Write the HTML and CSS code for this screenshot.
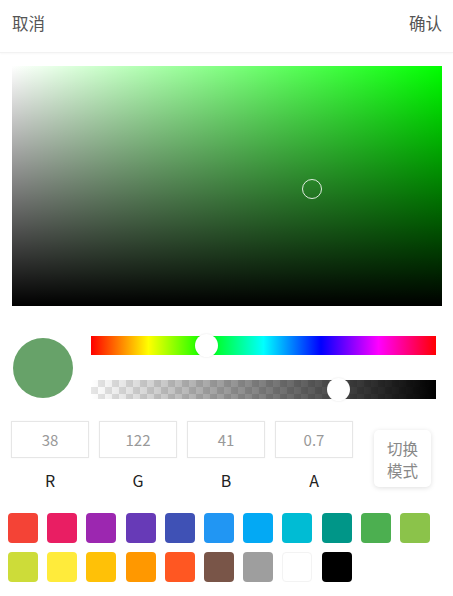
FILE: index.html
```html
<!DOCTYPE html>
<html lang="zh">
<head>
<meta charset="utf-8">
<link rel="stylesheet" href="styles.css">
</head>
<body>
<header class="bar">
  <span class="bar-btn">取消</span>
  <span class="bar-btn">确认</span>
</header>
<div class="sv">
  <div class="sv-white"></div>
  <div class="sv-black"></div>
  <div class="sv-cursor" style="left: 300px; top: 123px;"></div>
</div>
<div class="sliders">
  <div class="preview-wrap"><div class="preview"></div></div>
  <div class="tracks">
    <div class="track hue"><div class="thumb" style="left: 115px;"></div></div>
    <div class="track alpha"><div class="alpha-fill"></div><div class="thumb" style="left: 247px;"></div></div>
  </div>
</div>
<div class="inputs">
  <div class="field"><div class="box">38</div><div class="lbl">R</div></div>
  <div class="field"><div class="box">122</div><div class="lbl">G</div></div>
  <div class="field"><div class="box">41</div><div class="lbl">B</div></div>
  <div class="field"><div class="box">0.7</div><div class="lbl">A</div></div>
  <div class="mode">切换<br>模式</div>
</div>
<div class="swatches">
  <div class="sw" style="background:#f44336"></div>
  <div class="sw" style="background:#e91e63"></div>
  <div class="sw" style="background:#9c27b0"></div>
  <div class="sw" style="background:#673ab7"></div>
  <div class="sw" style="background:#3f51b5"></div>
  <div class="sw" style="background:#2196f3"></div>
  <div class="sw" style="background:#03a9f4"></div>
  <div class="sw" style="background:#00bcd4"></div>
  <div class="sw" style="background:#009688"></div>
  <div class="sw" style="background:#4caf50"></div>
  <div class="sw" style="background:#8bc34a"></div>
  <div class="sw" style="background:#cddc39"></div>
  <div class="sw" style="background:#ffeb3b"></div>
  <div class="sw" style="background:#ffc107"></div>
  <div class="sw" style="background:#ff9800"></div>
  <div class="sw" style="background:#ff5722"></div>
  <div class="sw" style="background:#795548"></div>
  <div class="sw" style="background:#9e9e9e"></div>
  <div class="sw sw-white" style="background:#ffffff"></div>
  <div class="sw" style="background:#000000"></div>
</div>
</body>
</html>
```
FILE: styles.css
```css
* { box-sizing: border-box; }
html, body { margin: 0; padding: 0; background: #fff; }
body {
  font-family: "Noto Sans CJK SC", "Noto Sans", sans-serif;
  width: 453px;
  height: 596px;
  overflow: hidden;
}
.bar {
  height: 53px;
  display: flex;
  justify-content: space-between;
  align-items: center;
  padding: 0 11px 5px 12px;
  border-bottom: 1px solid #f2f2f2;
  box-shadow: 0 1px 2px rgba(0,0,0,0.03);
}
.bar-btn {
  font-size: 16.5px;
  color: #555;
  line-height: 1;
}
.sv {
  position: relative;
  margin: 13px 11px 0 12px;
  height: 240px;
  background: #00ff00;
}
.sv-white {
  position: absolute; inset: 0;
  background: linear-gradient(to right, #fff, rgba(255,255,255,0));
}
.sv-black {
  position: absolute; inset: 0;
  background: linear-gradient(to bottom, rgba(0,0,0,0), #000);
}
.sv-cursor {
  position: absolute;
  width: 20px; height: 20px;
  margin: -10px 0 0 -10px;
  border: 1px solid rgba(255,255,255,0.85);
  border-radius: 50%;
}
.sliders {
  display: flex;
  margin-top: 30px;
  padding: 0 17px 0 13px;
  height: 64px;
}
.preview-wrap {
  width: 60px;
  padding-top: 2px;
}
.preview {
  width: 60px; height: 60px;
  border-radius: 50%;
  background: rgba(38,122,41,0.7);
}
.tracks {
  flex: 1;
  margin-left: 18px;
  display: flex;
  flex-direction: column;
  gap: 25px;
}
.track {
  position: relative;
  height: 19px;
}
.hue {
  background: linear-gradient(to right, #f00 0%, #ff0 16.66%, #0f0 33.33%, #0ff 50%, #00f 66.66%, #f0f 83.33%, #f00 100%);
}
.alpha {
  background-color: #fff;
  background-image:
    linear-gradient(45deg, #e6e6e6 25%, transparent 25%, transparent 75%, #e6e6e6 75%),
    linear-gradient(45deg, #e6e6e6 25%, transparent 25%, transparent 75%, #e6e6e6 75%);
  background-size: 14px 14px;
  background-position: 0 0, 7px 7px;
}
.alpha-fill {
  position: absolute; inset: 0;
  background: linear-gradient(to right, rgba(0,0,0,0), #000);
}
.thumb {
  position: absolute;
  top: 50%;
  width: 23px; height: 23px;
  margin: -11.5px 0 0 -11.5px;
  border-radius: 50%;
  background: #fff;
  box-shadow: 0 0 2px rgba(0,0,0,0.12);
}
.inputs {
  display: flex;
  align-items: flex-start;
  margin-top: 21px;
  padding-left: 11px;
  gap: 10px;
}
.field {
  width: 78px;
  display: flex;
  flex-direction: column;
  align-items: center;
}
.box {
  width: 78px; height: 37px;
  border: 1px solid #e6e6e6;
  box-shadow: 0 0 2px rgba(0,0,0,0.04);
  display: flex;
  align-items: center;
  justify-content: center;
  font-size: 15px;
  color: #999;
}
.lbl {
  margin-top: 11px;
  font-size: 16px;
  color: #222;
  line-height: 22px;
}
.mode {
  margin: 9px 0 0 11px;
  width: 57px; height: 57px;
  border-radius: 5px;
  background: #fff;
  box-shadow: 0 1px 5px rgba(0,0,0,0.13);
  font-size: 15.5px;
  line-height: 22px;
  color: #888;
  display: flex;
  align-items: center;
  justify-content: center;
  text-align: center;
}
.swatches {
  display: grid;
  grid-template-columns: repeat(11, 30px);
  column-gap: 9.2px;
  row-gap: 9px;
  margin-top: 22px;
  padding-left: 8px;
}
.sw {
  width: 30px; height: 30px;
  border-radius: 4px;
}
.sw-white {
  border: 1px solid #f3f3f3;
}
```
